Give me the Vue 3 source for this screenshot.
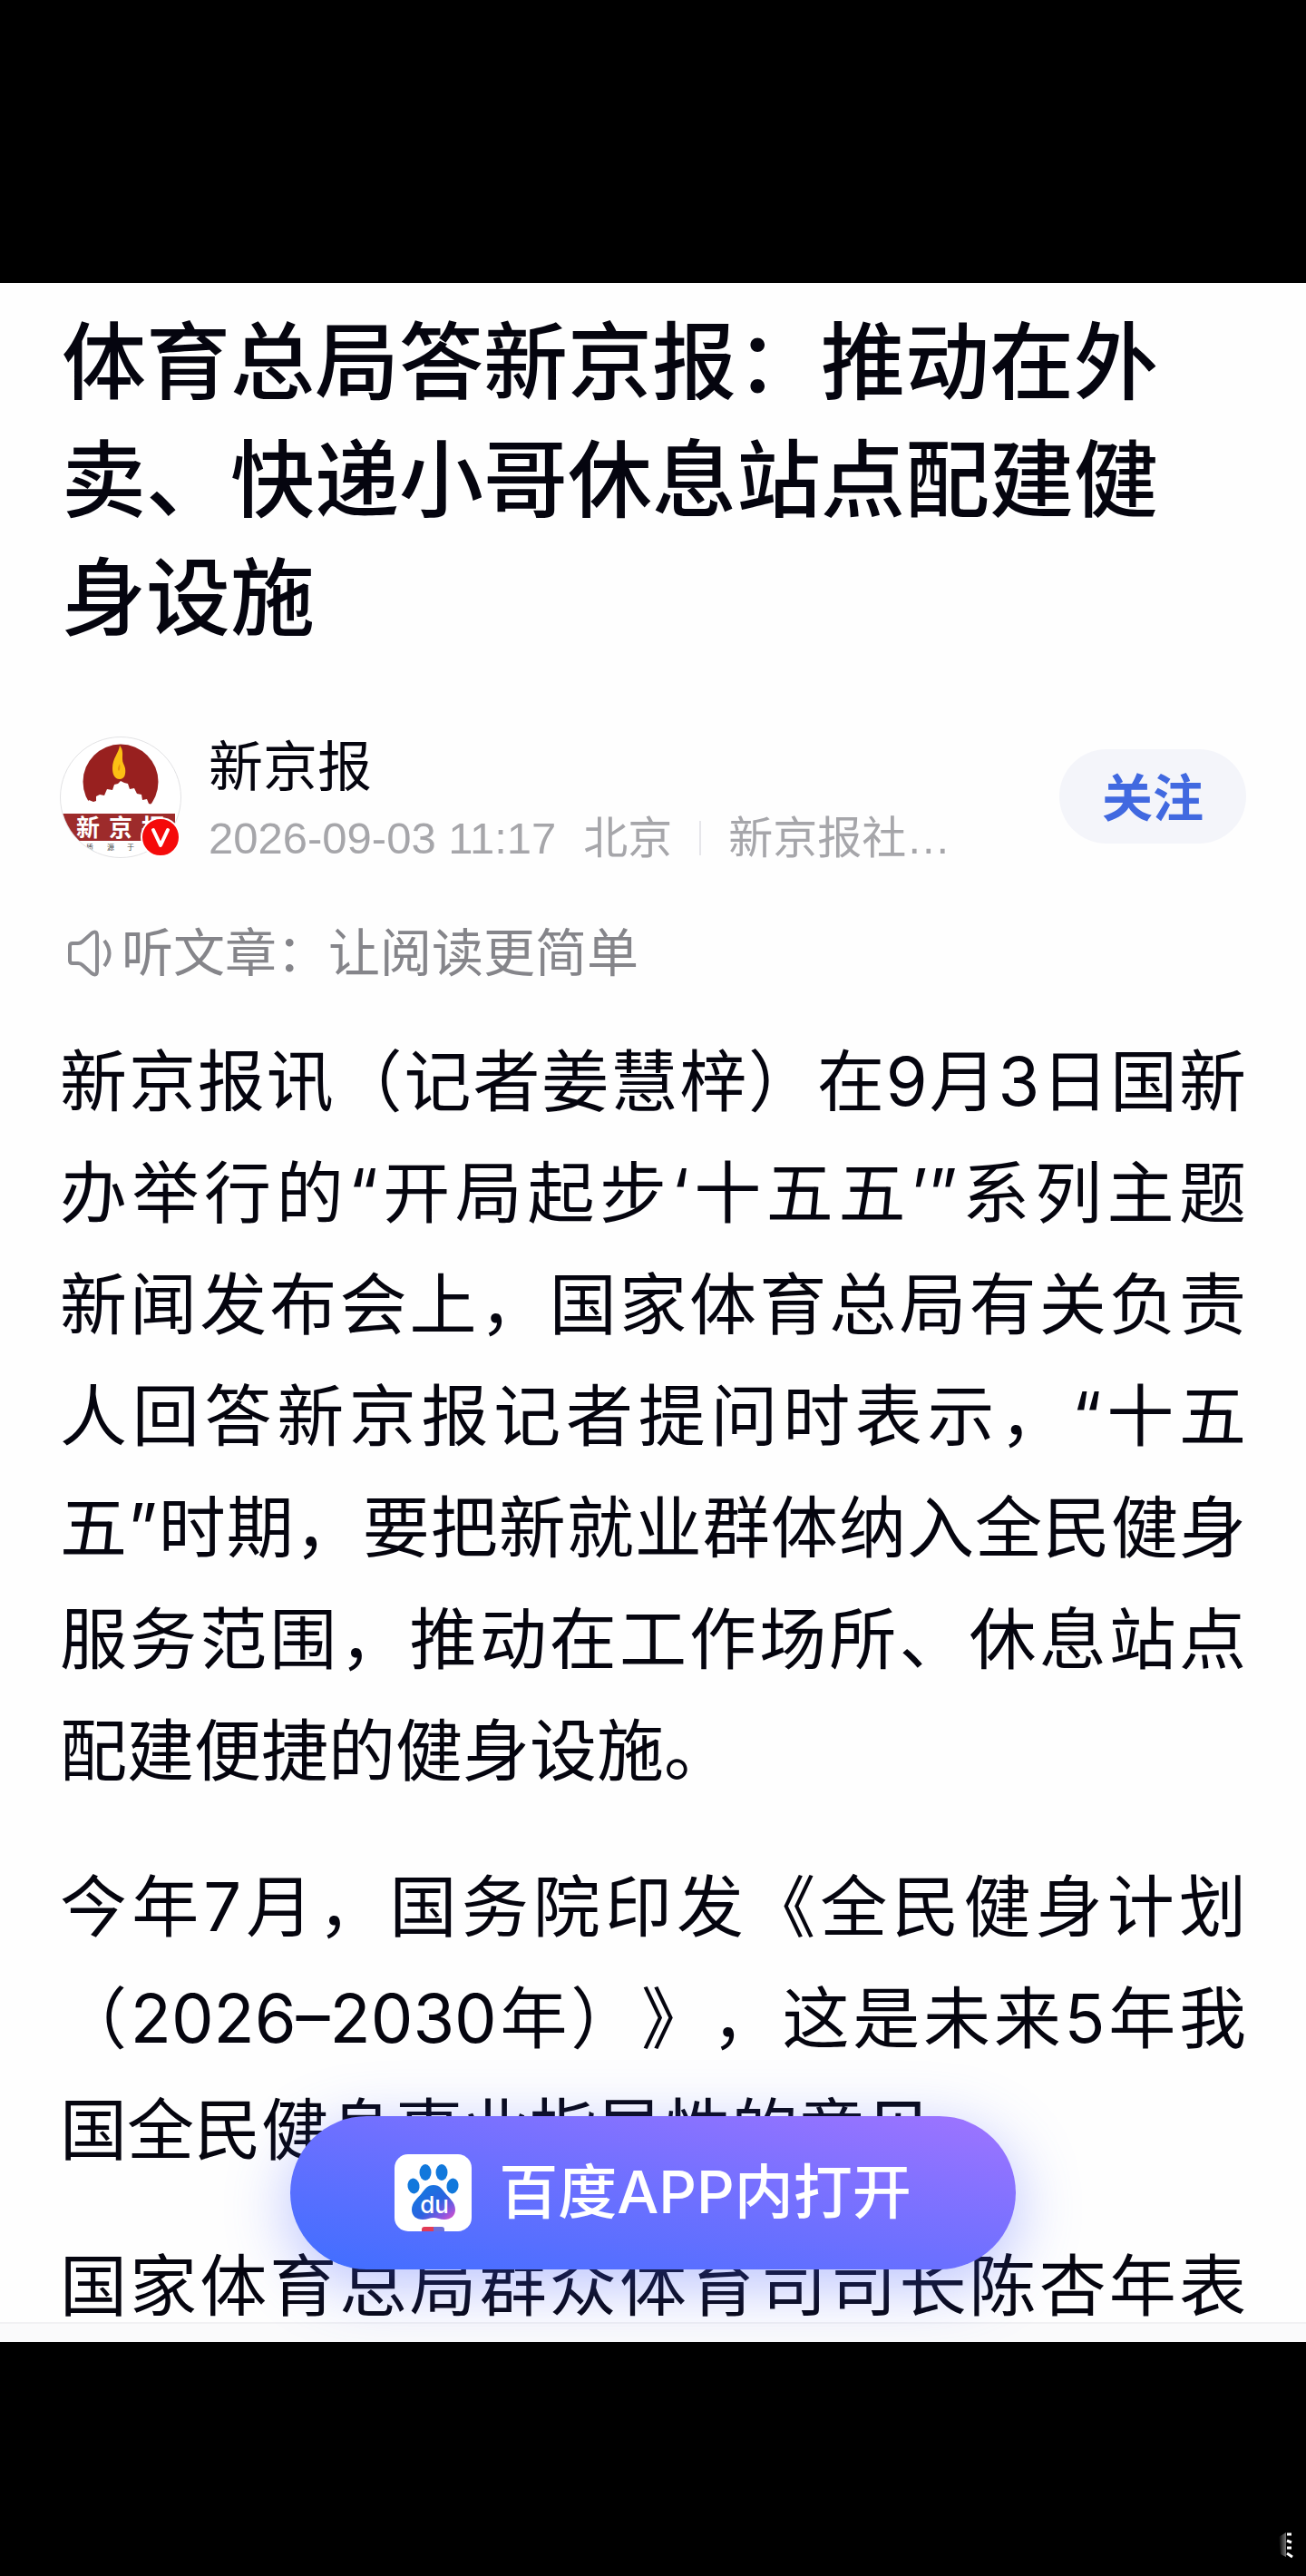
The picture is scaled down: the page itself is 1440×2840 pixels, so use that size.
<script setup>
import { ref } from "vue";

const titleLines = [
  "体育总局答新京报：推动在外",
  "卖、快递小哥休息站点配建健",
  "身设施",
];

const paragraphs = [
  [
    "新京报讯（记者姜慧梓）在9月3日国新",
    "办举行的“开局起步‘十五五’”系列主题",
    "新闻发布会上，国家体育总局有关负责",
    "人回答新京报记者提问时表示，“十五",
    "五”时期，要把新就业群体纳入全民健身",
    "服务范围，推动在工作场所、休息站点",
    "配建便捷的健身设施。",
  ],
  [
    "今年7月，国务院印发《全民健身计划",
    "（2026–2030年）》，这是未来5年我",
    "国全民健身事业指导性的意见。",
  ],
  ["国家体育总局群众体育司司长陈杏年表"],
];

const followed = ref(false);

function toggleFollow() {
  followed.value = !followed.value;
}

// the closing line of a paragraph stays left aligned
function isShort(line) {
  return line.endsWith("。");
}
</script>

<template>
  <div class="page">
    <main class="article">
      <h1 class="article__title">
        <span v-for="line in titleLines" :key="line" class="article__title-line">{{ line }}</span>
      </h1>

      <div class="author">
        <svg class="author__avatar" viewBox="0 0 134 134">
          <defs>
            <clipPath id="avatarClip"><circle cx="67" cy="67" r="66" /></clipPath>
          </defs>
          <circle cx="67" cy="67" r="66.5" fill="#fff" stroke="#e2e2e4" />
          <circle cx="67" cy="50" r="41.5" fill="#98201f" />
          <path
            d="M24 96V74l6-1 2-3 5 2 3-1v-5l4-2 5 1 3-7 6 1 2-6 4-1 3-3 4 2 4 1 2 6 5-1 3 6 5 1 1 6 5-1 2 5 4 1 5-1 6 3v20z"
            fill="#fff"
          />
          <path
            d="M66 10c-1 8-8 14-8 25 0 6 2 12 8 12 5 0 7-5 6-12-1-4-3-6-3-10 0-6 1-10-3-15z"
            fill="#fcc014"
          />
          <path d="M66 30c-2 4-3 6-1 8 1-1 2-4 1-8z" fill="#e8940c" />
          <g clip-path="url(#avatarClip)">
            <path d="M0 85h127v30H0z" fill="#9d2b2b" />
            <g class="author__logo">
              <text x="18" y="110">新</text>
              <text x="54" y="110">京</text>
              <text x="90" y="110">报</text>
            </g>
            <g class="author__slogan">
              <text x="29" y="125">质</text>
              <text x="52" y="125">源</text>
              <text x="74" y="125">于</text>
            </g>
          </g>
          <circle cx="111" cy="111" r="21" fill="#f50a0a" stroke="#fff" stroke-width="2" />
          <path d="M103 103l8 17 8-17" fill="none" stroke="#fff" stroke-width="4" stroke-linecap="round" stroke-linejoin="round" />
        </svg>
        <div class="author__info">
          <div class="author__name">新京报</div>
          <div class="author__meta">
            <span>2026-09-03 11:17</span>
            <span>北京</span>
            <i class="author__line"></i>
            <span>新京报社…</span>
          </div>
        </div>
        <button class="author__btn" :aria-pressed="followed" @click="toggleFollow">关注</button>
      </div>

      <div class="listen">
        <svg class="listen__icon" viewBox="0 0 50 56">
          <path
            d="M6 17h6q3 0 5-2l10-9q6-4 6 3v38q0 7-6 3l-10-9q-2-2-5-2H6q-3 0-3-3V20q0-3 3-3z"
            fill="none"
            stroke="#8b8b90"
            stroke-width="4"
          />
          <path d="M41 14q11 14 0 28" fill="none" stroke="#8b8b90" stroke-width="4" />
        </svg>
        <span>听文章：让阅读更简单</span>
      </div>

      <div class="text">
        <p v-for="(lines, index) in paragraphs" :key="index" class="text__block">
          <span
            v-for="line in lines"
            :key="line"
            class="text__line"
            :class="{ 'text__line--short': isShort(line) }"
          >{{ line }}</span>
        </p>
      </div>

      <div class="bottom-bar"></div>

      <button class="open-app">
        <svg class="open-app__icon" viewBox="0 0 85 85">
          <defs>
            <linearGradient id="paw" x1="0" y1="0" x2="1" y2="1">
              <stop offset="0" stop-color="#0a7fe0" />
              <stop offset="0.55" stop-color="#2b63e0" />
              <stop offset="0.8" stop-color="#8a55e0" />
              <stop offset="1" stop-color="#e94fc4" />
            </linearGradient>
          </defs>
          <rect width="85" height="85" rx="15" fill="#fff" />
          <g fill="#1178dc">
            <ellipse cx="34" cy="20" rx="6.5" ry="9" />
            <ellipse cx="52" cy="20" rx="6.5" ry="9" />
            <ellipse cx="21" cy="35" rx="6.5" ry="8.5" transform="rotate(-10 21 35)" />
            <ellipse cx="64" cy="35" rx="6.5" ry="8.5" transform="rotate(10 64 35)" />
          </g>
          <path
            d="M43 34c7 0 10 5 13 9 4 5 11 10 11 18 0 7-5 11-12 11-5 0-8-2-12-2s-7 2-12 2c-7 0-12-4-12-11 0-8 7-13 11-18 3-4 6-9 13-9z"
            fill="url(#paw)"
          />
          <text class="open-app__du" x="44" y="65" text-anchor="middle">du</text>
          <path d="M30 85v-2q0-3 3-3h10v5z" fill="#e23a55" />
          <path d="M43 80h9q3 0 3 3v2H43z" fill="#6c6fd8" />
        </svg>
        <span class="open-app__label">百度APP内打开</span>
      </button>
    </main>

    <footer class="footer">
      <svg class="footer__mark" viewBox="0 0 18 30">
        <defs>
          <linearGradient id="fade">
            <stop offset="0" stop-color="#000" />
            <stop offset="1" stop-color="#777" />
          </linearGradient>
        </defs>
        <path d="M2 6l8-5v27l-6-3z" fill="url(#fade)" />
        <path d="M11 3h5M11 10l5 2M11 18h5M11 24l6 4" stroke="#fff" stroke-width="3" />
      </svg>
    </footer>
  </div>
</template>

<style>
body {
  background-color: #000;
}
</style>

<style scoped>
* {
  margin: 0;
  padding: 0;
  box-sizing: border-box;
}
.page {
  min-height: 100vh;
  padding-top: 312px;
  display: flex;
  flex-direction: column;
  background-color: #000;
  font-family: "Liberation Sans", "Noto Sans CJK SC", sans-serif;
  text-spacing-trim: space-all;
}
.article {
  position: relative;
  overflow: hidden;
  padding: 24px 66px 0;
  background-color: #fefefe;
  color: #05050f;
}
.article__title {
  padding-left: 2px;
  font-size: 93px;
  font-weight: 500;
  line-height: 130px;
}
.article__title-line {
  display: block;
  white-space: nowrap;
}
.author {
  display: flex;
  align-items: flex-start;
  margin-top: 86px;
}
.author__avatar {
  flex: none;
  width: 134px;
  height: 134px;
  margin-right: 30px;
}
.author__logo {
  font-size: 26px;
  font-weight: 700;
  fill: #fff;
}
.author__slogan {
  font-size: 8px;
  fill: #444;
}
.author__info {
  flex: 1;
  white-space: nowrap;
}
.author__name {
  font-size: 60px;
  line-height: 70px;
}
.author__meta {
  display: flex;
  align-items: center;
  margin-top: 7px;
  font-size: 49px;
  line-height: 70px;
  color: #a6a6aa;
}
.author__meta span + span {
  margin-left: 30px;
}
.author__line {
  width: 2px;
  height: 38px;
  margin: 0 30px;
  background-color: #e6e6ea;
}
.author__btn {
  flex: none;
  width: 206px;
  height: 104px;
  margin-top: 14px;
  padding-bottom: 6px;
  border: none;
  border-radius: 52px;
  background-color: #f4f5fa;
  color: #4169e0;
  font-family: inherit;
  font-size: 56px;
  font-weight: 700;
  cursor: pointer;
}
.listen {
  display: flex;
  align-items: center;
  margin-top: 62px;
  padding-left: 8px;
  font-size: 57px;
  line-height: 60px;
  color: #85858a;
}
.listen__icon {
  width: 50px;
  height: 56px;
  margin-right: 10px;
}
.text {
  margin-top: 50px;
  font-family: Inter, "Noto Sans CJK SC", sans-serif;
  font-size: 74px;
  line-height: 123px;
}
.text__block + .text__block {
  margin-top: 49px;
}
.text__line {
  display: block;
  white-space: nowrap;
  text-align: justify;
  text-align-last: justify;
}
.text__line--short {
  text-align-last: left;
}
.bottom-bar {
  position: absolute;
  left: 0;
  right: 0;
  bottom: 0;
  height: 22px;
  border-top: 2px solid #f1f1f3;
  background-color: #fafafb;
}
.open-app {
  position: absolute;
  left: 50%;
  bottom: 80px;
  width: 800px;
  height: 169px;
  margin-left: -400px;
  display: flex;
  align-items: center;
  justify-content: center;
  gap: 30px;
  border: none;
  border-radius: 85px;
  background: linear-gradient(to top right, #3f6eff, #6e70ff 50%, #9f74ff);
  box-shadow: 0 16px 70px rgba(78, 100, 255, 0.4);
  color: #fff;
  font-family: Inter, "Noto Sans CJK SC", sans-serif;
  font-size: 65px;
  font-weight: 500;
  cursor: pointer;
}
.open-app__icon {
  width: 85px;
  height: 85px;
}
.open-app__label {
  padding-bottom: 12px;
}
.open-app__du {
  font-size: 26px;
  fill: #fff;
}
.footer {
  flex: 1;
  min-height: 257px;
  display: flex;
  align-items: flex-end;
  justify-content: flex-end;
  padding: 0 14px 19px;
}
.footer__mark {
  width: 18px;
  height: 30px;
}
</style>
